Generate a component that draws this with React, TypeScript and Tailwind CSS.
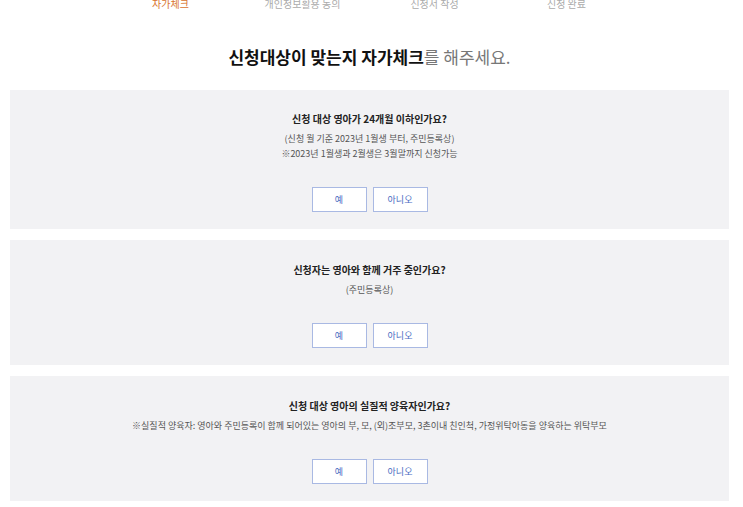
const steps = ["자가체크", "개인정보활용 동의", "신청서 작성", "신청 완료"]

type Question = {
	title: string
	notes: string[]
}

const questions: Question[] = [
	{
		title: "신청 대상 영아가 24개월 이하인가요?",
		notes: ["(신청 월 기준 2023년 1월생 부터, 주민등록상)", "※2023년 1월생과 2월생은 3월말까지 신청가능"],
	},
	{
		title: "신청자는 영아와 함께 거주 중인가요?",
		notes: ["(주민등록상)"],
	},
	{
		title: "신청 대상 영아의 실질적 양육자인가요?",
		notes: ["※실질적 양육자: 영아와 주민등록이 함께 되어있는 영아의 부, 모, (외)조부모, 3촌이내 친인척, 가정위탁아동을 양육하는 위탁부모"],
	},
]

function QuestionCard({ q }: { q: Question }) {
	return (
		<div
			className={`bg-[#f2f2f4] flex flex-col items-center pb-[17px] ${q.notes.length > 1 ? "pt-[21px]" : "pt-[22px]"}`}
		>
			<p className="text-[10px] leading-[16px] font-bold text-[#222]">{q.title}</p>
			<div className="mt-[4px] flex flex-col items-center">
				{q.notes.map((n) => (
					<p key={n} className="text-[9px] leading-[15px] text-[#555]">
						{n}
					</p>
				))}
			</div>
			<div className="mt-[26px] flex gap-[6px]">
				<button className="w-[55px] h-[25px] bg-white border border-[#a9b9e3] text-[9px] text-[#4a6cc2]">예</button>
				<button className="w-[55px] h-[25px] bg-white border border-[#a9b9e3] text-[9px] text-[#4a6cc2]">아니오</button>
			</div>
		</div>
	)
}

function App() {
	return (
		<div className="w-[743px] h-[507px] overflow-hidden bg-white font-['Noto_Sans_CJK_KR',sans-serif]">
			<div className="flex justify-center pr-[6px] -mt-[4px]">
				{steps.map((s, i) => (
					<div
						key={s}
						className={`w-[132px] text-center text-[10px] leading-[16px] ${i === 0 ? "text-[#d9732f]" : "text-[#aaa]"}`}
					>
						{s}
					</div>
				))}
			</div>
			<h1 className="mt-[34px] pr-[4px] text-center text-[17px] leading-[22px] font-bold text-[#111]">
				신청대상이 맞는지 자가체크<span className="font-normal text-[#777]">를 해주세요.</span>
			</h1>
			<div className="mt-[22px] pl-[10px] pr-[14px] flex flex-col gap-[11px]">
				{questions.map((q) => (
					<QuestionCard key={q.title} q={q} />
				))}
			</div>
		</div>
	)
}

export default App
